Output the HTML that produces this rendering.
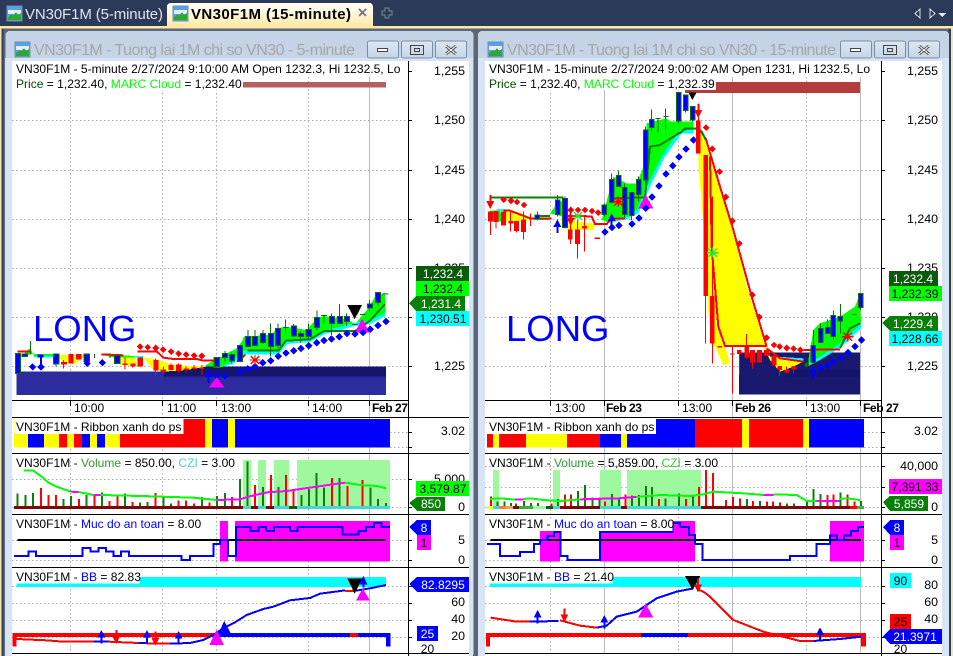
<!DOCTYPE html>
<html><head><meta charset="utf-8"><title>VN30F1M</title>
<style>
html,body{margin:0;padding:0;width:953px;height:656px;overflow:hidden;background:#2b3a58}
svg{position:absolute;left:0;top:0;display:block;shape-rendering:crispEdges}
text{font-family:"Liberation Sans",sans-serif;font-size:12.05px;fill:#000}
.ax{text-anchor:end;font-size:12.4px}
.mid{text-anchor:middle}
.w{fill:#fff}
.g{fill:none;stroke:#aaa;stroke-width:1;stroke-dasharray:1.5 2.5}
.s{fill:none;stroke:#bbb;stroke-width:1}
.k{fill:none;stroke:#000;stroke-width:1}
.c{fill:#00f;stroke:#0a6e0a;stroke-width:3}
.cw{fill:none;stroke:#0a6e0a;stroke-width:3}
.rw{fill:none;stroke:#f00;stroke-width:3}
.ln{fill:none;stroke-width:6;stroke-linejoin:miter}
.bd{fill:none;stroke:none;marker-start:url(#bm);marker-mid:url(#bm);marker-end:url(#bm)}
.rd{fill:none;stroke:none;marker-start:url(#rm);marker-mid:url(#rm);marker-end:url(#rm)}
.vg{fill:none;stroke:#0a800a;stroke-width:6}
.vr{fill:none;stroke:#f00;stroke-width:6}
</style></head><body>
<svg width="953" height="656" viewBox="0 0 953 656" xmlns="http://www.w3.org/2000/svg">
<defs>
<linearGradient id="tab" x1="0" y1="0" x2="0" y2="1"><stop offset="0" stop-color="#fffef8"/><stop offset=".5" stop-color="#fff6d8"/><stop offset="1" stop-color="#ffe8a6"/></linearGradient>
<linearGradient id="ttl" x1="0" y1="0" x2="0" y2="1"><stop offset="0" stop-color="#c4d4e6"/><stop offset="1" stop-color="#d8e5f4"/></linearGradient>
<linearGradient id="btn" x1="0" y1="0" x2="0" y2="1"><stop offset="0" stop-color="#dce7f3"/><stop offset="1" stop-color="#c5d5e7"/></linearGradient>
<marker id="bm" viewBox="-12 -12 24 24" markerWidth="24" markerHeight="24" markerUnits="userSpaceOnUse" refX="0" refY="0"><path d="M0 -11L11 0L0 11L-11 0Z" fill="#00f"/></marker>
<marker id="rm" viewBox="-12 -12 24 24" markerWidth="24" markerHeight="24" markerUnits="userSpaceOnUse" refX="0" refY="0"><path d="M0 -10L10 0L0 10L-10 0Z" fill="#f00"/></marker>
<g id="ic"><rect x="0" y="0" width="15" height="15" fill="#5aa0e8" stroke="#6f8fb0" stroke-width=".7"/><path d="M1 4h13v4H1z" fill="#dfefff"/><path d="M1 14V11L4 8L6 10L9 6L11 9L14 7V14Z" fill="#2fa82f"/></g>
<g id="ua"><path d="M-12 23L0 0L12 23Z"/><rect x="-3" y="23" width="6" height="18"/></g>
<g id="da"><rect x="-3" y="0" width="6" height="20"/><path d="M-12 18L12 18L0 42Z"/></g>
<path id="st" d="M-17 0H17M0 -15V15M-13 -12L13 12M13 -12L-13 12" fill="none" stroke-width="4"/>
</defs>

<!-- tab bar -->
<rect x="0" y="0" width="953" height="26" fill="#2b3a58"/>
<rect x="0" y="26" width="953" height="2.5" fill="#ffe8a6"/>
<rect x="0" y="28.5" width="953" height="628" fill="#5d6675"/>
<rect x="0" y="28" width="1.5" height="628" fill="#f4e4b0"/>
<rect x="951" y="28" width="2" height="628" fill="#f4e4b0"/>
<rect x="1.5" y="28.5" width="2" height="628" fill="#33415c"/>
<rect x="948.5" y="28.5" width="2.5" height="628" fill="#33415c"/>
<use href="#ic" x="7" y="6"/>
<text x="25" y="19" style="font-size:15px;fill:#dfe4ec" textLength="138">VN30F1M (5-minute)</text>
<path d="M167 26V7Q167 3 171 3H369Q373 3 373 7V26Z" fill="url(#tab)"/>
<use href="#ic" x="173" y="6"/>
<text x="191" y="19" style="font-size:15px;font-weight:bold" textLength="160">VN30F1M (15-minute)</text>
<path d="M359 9l7 7M366 9l-7 7" stroke="#777" stroke-width="1.5" fill="none"/>
<path d="M385 8h4v3h3v4h-3v3h-4v-3h-3v-4h3z" fill="none" stroke="#7d8797" stroke-width="1"/>
<path d="M920 9v9l-5 -4.500z" fill="none" stroke="#d8dee8"/>
<path d="M930 9v9l5 -4.500z" fill="none" stroke="#d8dee8"/>
<path d="M938 13h8l-4 4z" fill="#e8ecf2"/>

<!-- left window -->
<rect x="5.500" y="31" width="468" height="626" rx="4" fill="url(#ttl)"/>
<rect x="5" y="58" width="468" height="598" fill="#d6e4f5"/>
<rect x="12" y="61" width="457" height="596" fill="#fff"/>
<use href="#ic" x="15" y="42"/>
<text x="34" y="55" style="font-size:16px;fill:#a6a6a6" textLength="321">VN30F1M - Tuong lai 1M chi so VN30 - 5-minute</text>
<g fill="url(#btn)" stroke="#7d8ea3"><rect x="367.500" y="41" width="31" height="17" rx="2"/><rect x="401.500" y="41" width="31" height="17" rx="2"/><rect x="435.500" y="41" width="31" height="17" rx="2"/></g>
<rect x="377.500" y="48.500" width="10" height="3" fill="#fff" stroke="#444"/>
<rect x="410.500" y="45.500" width="13" height="9" fill="none" stroke="#444"/><rect x="414.500" y="48.500" width="5" height="3" fill="none" stroke="#444"/>
<path d="M446 46l10 8M456 46l-10 8" stroke="#555" stroke-width="3" fill="none"/><path d="M446 46l10 8M456 46l-10 8" stroke="#fff" stroke-width="1" fill="none"/>

<!-- right window -->
<rect x="478" y="31" width="471" height="626" rx="4" fill="url(#ttl)"/>
<rect x="478" y="58" width="471" height="598" fill="#d6e4f5"/>
<rect x="485" y="61" width="457" height="596" fill="#fff"/>
<use href="#ic" x="488" y="42"/>
<text x="507" y="55" style="font-size:16px;fill:#a6a6a6" textLength="329">VN30F1M - Tuong lai 1M chi so VN30 - 15-minute</text>
<g fill="url(#btn)" stroke="#7d8ea3"><rect x="840.500" y="41" width="31" height="17" rx="2"/><rect x="874.500" y="41" width="31" height="17" rx="2"/><rect x="908.500" y="41" width="31" height="17" rx="2"/></g>
<rect x="850.500" y="48.500" width="10" height="3" fill="#fff" stroke="#444"/>
<rect x="883.500" y="45.500" width="13" height="9" fill="none" stroke="#444"/><rect x="887.500" y="48.500" width="5" height="3" fill="none" stroke="#444"/>
<path d="M919 46l10 8M929 46l-10 8" stroke="#555" stroke-width="3" fill="none"/><path d="M919 46l10 8M929 46l-10 8" stroke="#fff" stroke-width="1" fill="none"/>

<!-- LEFT grid -->
<path class="g" d="M70.500 61V653M162.500 61V653M216.500 61V653M308.500 61V653"/>
<path class="s" d="M369.500 61V653"/>
<path class="g" d="M12 120.500H408M12 170.500H408M12 219.500H408M12 268.500H408M12 317.500H408M12 366.500H408M390 432.500H408M390 447.500H408M12 479.500H408M12 507.500H408M12 540.500H408M12 560.500H408M12 586.500H408M12 603.500H408M12 620.500H408M12 637.500H408"/>
<rect x="243" y="82" width="143" height="5.500" fill="#b56060"/>

<!-- LEFT main chart -->
<g transform="translate(0 270) scale(.33333)">
<rect x="50" y="305" width="1108" height="70" fill="#2c2c9f"/>
<rect x="490" y="290" width="668" height="28" fill="#14146b"/>
<rect x="490" y="318" width="668" height="4" fill="#1f1f85"/>
<path d="M66 258L88 235L100 252Z M100 252H170V262L100 258Z M300 254L410 258L420 263L340 262Z M610 290L650 266L650 290Z" fill="#0f0"/>
<path d="M100 258H168V262H100Z M400 258H430V263H400Z" fill="#0ff"/>
<path d="M177 255H250V262L225 282L185 280Z M360 262H410V290L360 285Z M430 262L470 268L520 285L620 290L560 300L490 305L460 300Z" fill="#ff0"/>
<path d="M52 245H95M305 253L370 256" stroke="#f00" stroke-width="6" fill="none"/>
<path class="cw" d="M92 213V252M168 250V290"/>
<rect class="c" x="46" y="250" width="16" height="60"/>
<rect class="c" x="66" y="252" width="16" height="8"/>
<rect x="113" y="253" width="18" height="9" fill="#00f"/>
<path d="M123 262V291M260 272V285" stroke="#00f" stroke-width="6" fill="none"/>
<rect class="c" x="160" y="252" width="17" height="30"/>
<rect x="183" y="276" width="18" height="8" fill="#f00"/><rect x="205" y="252" width="16" height="28" fill="#f00"/><rect x="228" y="252" width="16" height="16" fill="#f00"/>
<rect class="c" x="252" y="252" width="17" height="22"/>
<path class="cw" d="M283 252V264M330 254V264"/>
<rect class="c" x="343" y="256" width="17" height="25"/>
<path class="rw" d="M375 262V298M190 270V295M398 280V292M467 265V318M490 290V312M513 280V302M536 280V308M558 290V308M582 285V298M606 285V315"/>
<rect x="367" y="280" width="16" height="5" fill="#f00"/><rect x="391" y="280" width="16" height="10" fill="#f00"/><rect x="412" y="262" width="17" height="28" fill="#f00"/>
<rect x="460" y="270" width="16" height="32" fill="#f00"/><rect x="482" y="298" width="16" height="8" fill="#f00"/><rect x="505" y="285" width="16" height="15" fill="#f00"/><rect x="528" y="283" width="16" height="20" fill="#f00"/><rect x="551" y="295" width="16" height="5" fill="#f00"/><rect x="575" y="292" width="14" height="5" fill="#f00"/><rect x="598" y="292" width="14" height="5" fill="#f00"/>
<path class="ln" stroke="#f00" d="M412 244H470L490 263L520 267H590L610 272H720L742 245"/>
<path class="rd" d="M420 230h.1M443 232h.1M467 234h.1M489 239h.1M513 245h.1M536 251h.1M558 254h.1M582 257h.1M605 258h.1"/>
<rect class="c" x="642" y="262" width="18" height="28"/>
</g>
<g transform="translate(200 280) scale(.33333)">
<path d="M40 262L50 245L70 225L110 205L125 185L132 170L210 165L235 145L255 140L270 142L320 150L350 115L372 108L445 120L465 132L505 85L525 50L555 38L557 98L510 125L465 130L375 155L330 178L258 185L235 215L130 217L100 245L60 262Z" fill="#0f0"/>
<path d="M60 262L100 252L130 224L235 224L262 192L330 186L375 162L465 138L510 132L557 108L557 96L510 122L465 128L375 152L330 175L258 182L235 212L130 212L100 242Z" fill="#0ff"/>
<path class="ln" stroke="#0a800a" d="M142 212H236L258 182L330 178L372 153H465L510 122L555 72"/>
<path class="cw" d="M75 213V245M95 218V250M120 196V245M144 150V200M165 150V200M189 150V192M212 130V230M234 130V205M256 118V160M249 142H266M281 132V172M302 155V188M326 130V178M351 92V150M372 107V130M363 107H381M395 100V165M419 72V130M440 100V138M456 133H474M480 103H497M509 60V95M534 38V75M548 42H566"/>
<g class="c"><rect x="43" y="232" width="16" height="28"/><rect x="67" y="220" width="15" height="12"/><rect x="88" y="223" width="15" height="20"/><rect x="112" y="196" width="16" height="48"/><rect x="136" y="169" width="16" height="30"/><rect x="157" y="169" width="16" height="28"/><rect x="181" y="160" width="16" height="28"/><rect x="205" y="160" width="15" height="40"/><rect x="226" y="145" width="16" height="52"/><rect x="274" y="138" width="15" height="30"/><rect x="295" y="160" width="15" height="10"/><rect x="318" y="148" width="16" height="22"/><rect x="344" y="112" width="15" height="30"/><rect x="388" y="110" width="16" height="20"/><rect x="412" y="110" width="15" height="20"/><rect x="433" y="110" width="15" height="14"/><rect x="502" y="72" width="15" height="12"/><rect x="526" y="38" width="16" height="30"/></g>
<path d="M466 157L486 115L508 157Z" fill="#f0f"/>
<path d="M442 75H486L464 118Z" fill="#000"/>
</g>
<g transform="translate(0 270) scale(.33333)">
<path class="bd" d="M98 291h.1M123 291h.1M261 280h.1M307 278h.1M651 318h.1M675 318h.1M720 306h.1M743 296h.1M765 290h.1M788 278h.1M812 272h.1M835 259h.1M858 249h.1M881 242h.1M903 236h.1M926 227h.1M950 218h.1M972 212h.1M995 207h.1M1018 200h.1M1041 191h.1M1065 192h.1M1089 188h.1M1111 178h.1M1134 167h.1M1158 155h.1"/>
<use href="#ua" x="626" y="298" fill="#00f"/>
<path d="M627 352L650 322L673 352Z" fill="#f0f"/>
<use href="#st" x="765" y="270" stroke="#f00"/>
</g>
<text x="33" y="341" style="font-size:36.500px;fill:#00f">LONG</text>
<rect x="14" y="61" width="390" height="16" class="w"/><rect x="14" y="77" width="229" height="13" class="w"/>
<text x="16" y="73">VN30F1M - 5-minute 2/27/2024 9:10:00 AM Open 1232.3, Hi 1232.5, Lo</text>
<text x="16" y="88"><tspan fill="#004d00">Price</tspan> = 1,232.40, <tspan fill="#0f0">MARC Cloud</tspan> = 1,232.40</text>

<!-- LEFT lower panes -->
<g transform="translate(0 415) scale(.33333)">
<g>
<rect x="42" y="12" width="42" height="86" fill="#ff0"/><rect x="84" y="12" width="48" height="86" fill="#00f"/><rect x="132" y="12" width="45" height="86" fill="#ff0"/><rect x="177" y="12" width="24" height="86" fill="#f00"/><rect x="201" y="12" width="21" height="86" fill="#ff0"/><rect x="222" y="12" width="24" height="86" fill="#f00"/><rect x="246" y="12" width="24" height="86" fill="#00f"/><rect x="270" y="12" width="21" height="86" fill="#ff0"/><rect x="291" y="12" width="24" height="86" fill="#00f"/><rect x="315" y="12" width="45" height="86" fill="#ff0"/><rect x="360" y="12" width="255" height="86" fill="#f00"/><rect x="615" y="12" width="21" height="86" fill="#ff0"/><rect x="636" y="12" width="48" height="86" fill="#00f"/><rect x="684" y="12" width="21" height="86" fill="#ff0"/><rect x="705" y="12" width="465" height="86" fill="#00f"/>
<rect x="44" y="12" width="506" height="45" fill="#fff"/>
</g>
<g fill="#9ef99e"><rect x="729" y="135" width="24" height="138"/><rect x="774" y="135" width="24" height="138"/><rect x="822" y="135" width="45" height="138"/><rect x="891" y="135" width="279" height="138"/></g>
<rect x="42" y="273" width="687" height="9" fill="#7a0a0a"/>
<rect x="729" y="273" width="441" height="9" fill="#40d8d8"/>
<rect x="753" y="273" width="21" height="9" fill="#7a0a0a"/><rect x="798" y="273" width="24" height="9" fill="#7a0a0a"/><rect x="867" y="273" width="24" height="9" fill="#0a6010"/>
<path class="vg" d="M53 235V273M76 240V273M99 234V273M191 252V273M213 243V273M260 240V273M306 232V273M375 235V273M420 262V273M443 261V273M490 246V273M513 265V273M606 246V273M651 243V273M675 234V273M720 192V273M743 140V273M789 216V273M835 216V273M904 240V273M927 222V273M950 174V273M972 218V273M1019 189V273M1111 218V273M1134 252V273M1158 264V273"/>
<path class="vr" d="M123 219V273M145 240V273M168 240V273M237 252V273M283 238V273M329 258V273M352 245V273M398 261V273M467 234V273M536 256V273M558 257V273M582 265V273M628 262V273M696 246V273M765 210V273M813 180V273M858 180V273M881 222V273M996 189V273M1042 213V273M1088 195V273"/>
<path class="ln" stroke="#0f0" d="M72 167H100L125 185L145 203L170 215L212 230M235 231L280 240M302 240L420 243L580 248L650 255M1035 203L1080 210L1130 213L1158 220"/>
<path class="ln" stroke="#f0f" d="M212 230L235 231M280 240H302M650 255L720 253L745 245L800 232L860 228L950 215L1035 203"/>

<g fill="#f0f"><rect x="660" y="318" width="24" height="122"/><rect x="705" y="318" width="465" height="122"/></g>
<path d="M52 375H1158" stroke="#000" stroke-width="6"/>
<path class="ln" stroke="#00f" d="M42 423H85V410H108V423H248V399H272V410H295V399H318V410H340V423H363V410H387V423H545V435H570V423H640V387H660V375H684V423H708V336H752V348H775V336H798V348H822V336H870V348H893V336H1028V358H1075V348H1098V336H1122V324H1145V336H1170"/>

<rect x="50" y="486" width="1108" height="30" fill="#0ff"/>
<rect x="44" y="470" width="374" height="36" fill="#fff"/>
<path d="M38 654H640V666H38Z M38 666H50V695H38Z M1050 654H1074V666H1050Z" fill="#f00"/>
<path d="M640 654H1050V666H640Z M1074 654H1172V666H1074Z M1158 666H1172V695H1158Z" fill="#00f"/>
<path class="ln" stroke="#f00" d="M50 672L140 676L190 680H280M325 680L415 684M440 686H510M1036 528H1062"/>
<path class="ln" stroke="#00f" d="M280 680H325M415 684H440M510 686L570 684L610 675L640 660L670 640L700 625L740 600L790 582L820 575L870 556L930 549L960 536L1036 526M1062 528L1110 520L1158 510"/>
<use href="#ua" x="304" y="645" fill="#00f"/><use href="#ua" x="441" y="645" fill="#00f"/><use href="#ua" x="536" y="648" fill="#00f"/>
<use href="#da" x="349" y="645" fill="#f00"/><use href="#da" x="466" y="650" fill="#f00"/>
<path d="M655 655L673 618L692 655Z" fill="#00f"/>
<path d="M628 690L650 645L672 690Z" fill="#f0f"/>
<path d="M1078 508L1090 482L1102 508Z M1087 508h6v10h-6z" fill="#00f"/>
<path d="M1042 491H1086L1064 536Z" fill="#000"/>
<path d="M1068 557L1088 520L1110 557Z" fill="#f0f"/>
</g>

<!-- RIGHT grid -->
<path class="g" d="M550.500 61V653M678.500 61V653M806.500 61V653"/>
<path class="s" d="M604.500 61V653M732.500 61V653M860.500 61V653"/>
<path class="g" d="M485 120.500H881M485 170.500H881M485 219.500H881M485 268.500H881M485 317.500H881M485 366.500H881M864 432.500H881M864 447.500H881M485 466.500H881M485 487.500H881M485 507.500H881M485 540.500H881M485 560.500H881M485 586.500H881M485 603.500H881M485 620.500H881M485 637.500H881"/>
<rect x="685" y="82" width="175" height="11" fill="#b33c3c"/>

<!-- RIGHT main chart -->
<g transform="translate(680 80) scale(.33333)">
<rect x="177" y="818" width="363" height="126" fill="#191970"/>
<rect x="318" y="868" width="222" height="22" fill="#14146b"/>
</g>
<g transform="translate(480 80) scale(.33333)">
<path d="M365 420L385 345L400 290L440 310L470 310L495 250L500 130L560 115L570 125L640 125L640 150L600 150L550 220L510 300L470 390L440 410L380 425Z" fill="#0f0"/>
<path d="M380 425L440 410L470 390L510 300L550 220L600 150L640 150L642 160L605 160L555 230L515 310L475 400L440 418L380 430Z" fill="#0ff"/>
<path d="M30 392H60L75 425H40L30 420Z M160 412H210V420H160Z M210 400L228 375L250 360L250 410Z" fill="#0f0"/>
<path d="M50 390H75" stroke="#0ff" stroke-width="5" fill="none"/>
<path d="M60 395L110 395L150 410L140 425L75 425Z M255 420L350 432L340 445L352 475L342 450L260 450Z" fill="#ff0"/>
<path class="ln" stroke="#0a800a" d="M32 353H250M400 355L495 352L510 200L540 195L620 145H650L675 175"/>
<path class="ln" stroke="#f00" d="M70 392H90L150 415H215M260 408H310L335 410L345 432H380L395 415H435"/>
<path class="ln" stroke="#0a800a" d="M175 408H210"/>
<g fill="#f00"><rect x="24" y="395" width="15" height="30"/><rect x="41" y="393" width="15" height="33"/><rect x="63" y="395" width="15" height="42"/><rect x="85" y="423" width="15" height="8"/><rect x="102" y="423" width="15" height="30"/><rect x="123" y="418" width="15" height="38"/><rect x="264" y="448" width="14" height="30"/><rect x="285" y="448" width="15" height="44"/><rect x="306" y="438" width="15" height="8"/><rect x="344" y="473" width="16" height="4"/></g>
<path class="rw" d="M31 395V465M48 395V445M92 395V455M109 430V458M130 395V478M152 400V438M271 420V492M292 420V535M313 405V515"/>
<use href="#da" x="31" y="345" fill="#f00"/>
<use href="#da" x="272" y="395" fill="#f00"/>
<use href="#st" x="294" y="408" stroke="#2ce02c"/>
<path class="rd" d="M71 359h.1M93 362h.1M111 366h.1M132 375h.1M272 390h.1M294 390h.1M315 390h.1M336 393h.1M354 398h.1"/>
<path class="cw" d="M172 395V422M232 345V410M255 350V445M373 370V410M395 280V370M416 272V320M434 310V415M455 338V420M476 290V365M497 140V320M515 88V155M526 115H541M534 115V158M550 110H565M557 85V150M596 38V130M617 45V98M638 80V125"/>
<g class="c"><rect x="165" y="405" width="14" height="12"/><rect x="226" y="360" width="14" height="44"/><rect x="248" y="355" width="14" height="88"/><rect x="366" y="375" width="14" height="28"/><rect x="388" y="298" width="14" height="70"/><rect x="409" y="286" width="14" height="34"/><rect x="427" y="322" width="14" height="82"/><rect x="448" y="338" width="14" height="68"/><rect x="469" y="298" width="14" height="46"/><rect x="490" y="150" width="14" height="150"/><rect x="508" y="118" width="14" height="25"/><rect x="589" y="38" width="14" height="85"/><rect x="610" y="45" width="14" height="47"/><rect x="631" y="80" width="14" height="40"/></g>
<use href="#ua" x="232" y="418" fill="#00f"/>
<use href="#ua" x="395" y="400" fill="#00f"/>
<path d="M474 386L497 344L520 386Z" fill="#f0f"/>
<use href="#st" x="415" y="365" stroke="#f00"/>
<path class="bd" d="M375 456h.1M396 443h.1M417 437h.1M456 432h.1M477 414h.1M497 385h.1M516 351h.1M537 318h.1M558 282h.1M578 257h.1M597 231h.1M618 207h.1M640 180h.1"/>
<path d="M625 37H650L637 60Z" fill="#000"/>
</g>
<g transform="translate(680 80) scale(.33333)">
<path d="M55 145L70 165L85 215L120 310L160 440L200 620L255 790L270 830L370 845L340 860L300 875L270 840L250 800L135 798L150 850L130 855L100 790L85 700L70 430L55 250Z" fill="#ff0"/>
<path d="M385 840L400 750L420 730L450 720L480 710L525 680L540 640L543 730L480 790L420 830L385 850Z" fill="#0f0"/>
<path d="M385 850L420 830L480 790L543 730L543 745L485 800L420 840L385 858Z" fill="#0ff"/>
<path d="M270 830L370 845L370 835L290 830Z" fill="#0ff"/>
<path class="ln" stroke="#f00" d="M60 150L78 178L120 320L160 450L215 650L260 800M90 230L95 500L115 740L135 798H260M260 805L300 835L370 845M370 810L480 808"/>
<path class="ln" stroke="#0a800a" d="M0 160L15 145H45L65 155L78 180M480 805L510 745L540 730"/>
<g fill="#f00"><rect x="48" y="122" width="14" height="98"/><rect x="70" y="225" width="14" height="423"/><rect x="90" y="648" width="14" height="142"/><rect x="112" y="798" width="14" height="4"/><rect x="150" y="820" width="14" height="3"/><rect x="171" y="810" width="14" height="12"/><rect x="193" y="798" width="14" height="35"/><rect x="210" y="810" width="15" height="38"/><rect x="231" y="810" width="15" height="38"/><rect x="252" y="810" width="15" height="18"/><rect x="275" y="826" width="15" height="30"/><rect x="292" y="858" width="14" height="12"/><rect x="313" y="868" width="14" height="10"/><rect x="335" y="858" width="14" height="10"/></g>
<path class="rw" d="M55 70V220M77 225V790M97 350V850M157 798V940M178 810V885M200 762V835M217 810V865M299 858V888M320 860V880M341 858V880"/>
<use href="#st" x="98" y="518" stroke="#2ce02c"/>
<path class="rd" d="M78 143h.1M97 207h.1M119 275h.1M137 351h.1M157 423h.1M178 491h.1M217 645h.1M238 711h.1M260 773h.1M282 795h.1M299 800h.1M320 804h.1M341 806h.1M361 810h.1"/>
<use href="#da" x="55" y="72" fill="#f00"/>
<path class="cw" d="M400 750V847M422 730V787M443 718V760M460 692V780M481 672V760M517 703H530M542 640V690"/>
<g class="c"><rect x="393" y="797" width="14" height="50"/><rect x="415" y="745" width="14" height="42"/><rect x="436" y="742" width="14" height="18"/><rect x="453" y="706" width="14" height="64"/><rect x="474" y="709" width="14" height="14"/><rect x="535" y="640" width="14" height="43"/></g>
<use href="#ua" x="401" y="858" fill="#00f"/>
<path d="M380 854h.1" stroke="#0a6e0a" stroke-width="14" stroke-linecap="round"/>
<path class="bd" d="M422 863h.1M443 857h.1M461 846h.1M483 833h.1M504 818h.1M525 800h.1M544 780h.1"/>
<use href="#st" x="503" y="770" stroke="#f00"/>
</g>
<text x="506" y="341" style="font-size:36.500px;fill:#00f">LONG</text>
<rect x="487" y="61" width="390" height="16" class="w"/><rect x="487" y="77" width="229" height="13" class="w"/>
<text x="489" y="73">VN30F1M - 15-minute 2/27/2024 9:00:02 AM Open 1231, Hi 1232.5, Lo</text>
<text x="489" y="88"><tspan fill="#004d00">Price</tspan> = 1,232.40, <tspan fill="#0f0">MARC Cloud</tspan> = 1,232.39</text>

<!-- RIGHT lower panes -->
<g transform="translate(480 415) scale(.33333)">
<rect x="21" y="12" width="18" height="86" fill="#f00"/><rect x="39" y="12" width="18" height="86" fill="#ff0"/><rect x="57" y="12" width="81" height="86" fill="#f00"/><rect x="138" y="12" width="123" height="86" fill="#ff0"/><rect x="261" y="12" width="99" height="86" fill="#f00"/><rect x="360" y="12" width="63" height="86" fill="#00f"/><rect x="423" y="12" width="18" height="86" fill="#ff0"/><rect x="441" y="12" width="204" height="86" fill="#00f"/><rect x="645" y="12" width="141" height="86" fill="#f00"/><rect x="786" y="12" width="21" height="86" fill="#ff0"/><rect x="807" y="12" width="162" height="86" fill="#f00"/><rect x="969" y="12" width="18" height="86" fill="#ff0"/><rect x="987" y="12" width="165" height="86" fill="#00f"/>
<rect x="18" y="12" width="510" height="45" fill="#fff"/>

<g fill="#9ef99e"><rect x="39" y="165" width="18" height="108"/><rect x="219" y="165" width="21" height="108"/><rect x="360" y="165" width="63" height="108"/><rect x="441" y="165" width="222" height="108"/></g>
<rect x="21" y="273" width="18" height="9" fill="#ff0"/><rect x="39" y="273" width="18" height="9" fill="#40d8d8"/><rect x="57" y="273" width="21" height="9" fill="#ff7f27"/><rect x="78" y="273" width="21" height="9" fill="#f0a060"/><rect x="99" y="273" width="18" height="9" fill="#7a0a0a"/><rect x="117" y="273" width="42" height="9" fill="#3cb03c"/><rect x="159" y="273" width="39" height="9" fill="#9ef99e"/><rect x="198" y="273" width="21" height="9" fill="#0a6010"/><rect x="219" y="273" width="21" height="9" fill="#40d8d8"/><rect x="240" y="273" width="120" height="9" fill="#7a0a0a"/><rect x="360" y="273" width="63" height="9" fill="#40d8d8"/><rect x="423" y="273" width="18" height="9" fill="#7a0a0a"/><rect x="441" y="273" width="222" height="9" fill="#40d8d8"/><rect x="663" y="273" width="447" height="9" fill="#7a0a0a"/><rect x="1110" y="273" width="21" height="9" fill="#f00"/><rect x="1131" y="273" width="21" height="9" fill="#3cb03c"/>
<path class="vg" d="M52 260V273M74 260V273M93 264V273M108 265V273M132 258V273M153 264V273M174 264V273M234 252V273M294 228V273M315 210V273M337 248V273M358 248V273M396 237V273M417 248V273M456 242V273M477 240V273M498 213V273M516 216V273M556 250V273M597 235V273M639 242V273M801 252V273M840 258V273M921 265V273M942 265V273M981 256V273M1000 222V273M1022 237V273M1082 232V273M1143 258V273"/>
<path class="vr" d="M33 245V273M214 265V273M255 238V273M273 238V273M375 260V273M436 238V273M537 252V273M618 252V273M657 216V273M678 165V273M699 174V273M738 255V273M759 246V273M780 250V273M819 258V273M861 260V273M879 260V273M900 262V273M1043 240V273M1061 238V273M1103 238V273M1124 260V273"/>
<path class="ln" stroke="#0f0" d="M30 252L60 250L105 254M130 252L150 250L190 255L240 258L300 253M470 246L540 240L630 243L670 238L700 230L790 235L850 240M880 238L950 240L980 258L1010 258M1080 252L1100 250L1140 255"/>
<path class="ln" stroke="#f0f" d="M105 254H130M300 253L415 250L470 246M850 240H880M1010 258H1080"/>

<g fill="#f0f"><rect x="180" y="318" width="60" height="122"/><rect x="360" y="318" width="285" height="122"/><rect x="1050" y="318" width="102" height="122"/></g>
<path d="M32 375H1143" stroke="#000" stroke-width="6"/>
<path class="ln" stroke="#00f" d="M21 387H60V423H120V411H162V387H180V375H203V363H222V351H241V423H263V435H360V351H578V324H600V336H627V360H645V387H667V435H930V423H1010V387H1050V362H1071V375H1092V362H1113V348H1134V336H1152"/>
<rect x="24" y="310" width="554" height="38" fill="#fff"/>

<rect x="30" y="486" width="1113" height="30" fill="#0ff"/>
<rect x="24" y="470" width="374" height="36" fill="#fff"/>
<path d="M18 654H483V666H18Z M18 666H30V695H18Z M624 654H1158V666H624Z M1143 666H1158V695H1143Z" fill="#f00"/>
<rect x="483" y="654" width="141" height="12" fill="#00f"/>
<path class="ln" stroke="#f00" d="M32 608L110 620H150M240 616L300 632L350 638M650 522L670 530L690 545L760 615L850 650L960 678H1000"/>
<path class="ln" stroke="#00f" d="M150 620L235 618M350 638L380 632L410 605L470 590L530 550L590 530L640 520M1000 678L1080 672L1143 665"/>
<use href="#ua" x="173" y="585" fill="#00f"/><use href="#da" x="253" y="580" fill="#f00"/><use href="#ua" x="373" y="600" fill="#00f"/><use href="#ua" x="1020" y="637" fill="#00f"/>
<path d="M474 608L497 566L520 608Z" fill="#f0f"/>
<path d="M615 483H661L638 525Z" fill="#000"/>
<use href="#da" x="654" y="490" fill="#f00"/>
</g>

<!-- LEFT axis -->
<path class="k" d="M408.500 61V657M12 400.500H408M12 417.500H469M12 453.500H469M12 514.500H469M12 567.500H469M12 653.500H469"/>
<path d="M408 71.500h4M408 120.500h4M408 170.500h4M408 219.500h4M408 268.500h4M408 317.500h4M408 366.500h4M70.500 400v6M162.500 400v6M216.500 400v6M308.500 400v6M369.500 400v6M408 432.500h4M408 447.500h4M408 479.500h4M408 507.500h4M408 540.500h4M408 560.500h4M408 586.500h4M408 603.500h4M408 620.500h4M408 637.500h4" stroke="#000" fill="none"/>
<text x="465" y="75" class="ax">1,255</text><text x="465" y="124" class="ax">1,250</text><text x="465" y="174" class="ax">1,245</text><text x="465" y="223" class="ax">1,240</text><text x="465" y="272" class="ax">1,235</text><text x="465" y="321" class="ax">1,230</text><text x="465" y="370" class="ax">1,225</text><text x="465" y="435" class="ax">3.02</text><text x="465" y="483" class="ax">5,000</text><text x="465" y="511" class="ax">0</text><text x="465" y="544" class="ax">5</text><text x="465" y="564" class="ax">0</text><text x="465" y="606" class="ax">60</text><text x="465" y="623" class="ax">40</text><text x="465" y="640" class="ax">20</text>
<text x="74" y="412">10:00</text><text x="167" y="412">11:00</text><text x="221" y="412">13:00</text><text x="312" y="412">14:00</text><text x="372" y="412" style="font-weight:bold" textLength="36">Feb 27</text>
<rect x="416" y="266" width="53" height="15" fill="#0a5a0a"/><text x="443" y="278" class="mid" style="fill:#fff">1,232.4</text>
<rect x="416" y="281" width="53" height="15" fill="#0f0"/><text x="443" y="293" class="mid">1,232.4</text>
<path d="M409 303L416 296H465V311H416Z" fill="#088008"/><text x="441" y="308" class="mid" style="fill:#fff">1,231.4</text>
<rect x="416" y="311" width="53" height="15" fill="#0ff"/><text x="443" y="323" class="mid">1,230.51</text>
<rect x="416" y="481" width="53" height="15" fill="#0f0"/><text x="443" y="493" class="mid">3,579.87</text>
<path d="M409 503L417 497H445V511H417Z" fill="#088008"/><text x="431" y="508" class="mid" style="fill:#fff">850</text>
<path d="M409 527L417 520H431V535H417Z" fill="#00f"/><text x="424" y="532" class="mid" style="fill:#fff">8</text>
<rect x="417" y="535" width="14" height="15" fill="#f0f"/><text x="424" y="547" class="mid">1</text>
<path d="M409 584L417 577H469V592H417Z" fill="#00f"/><text x="443" y="589" class="mid" style="fill:#fff">82.8295</text>
<rect x="417" y="626" width="21" height="15" fill="#00f"/><text x="427.500" y="638" class="mid" style="fill:#fff">25</text>
<text x="427.500" y="653" class="mid">20</text>

<!-- RIGHT axis -->
<path class="k" d="M881.500 61V657M485 400.500H881M485 417.500H942M485 453.500H942M485 514.500H942M485 567.500H942M485 653.500H942"/>
<path d="M881 71.500h4M881 120.500h4M881 170.500h4M881 219.500h4M881 268.500h4M881 317.500h4M881 366.500h4M550.500 400v6M604.500 400v6M678.500 400v6M732.500 400v6M806.500 400v6M860.500 400v6M881 432.500h4M881 447.500h4M881 466.500h4M881 487.500h4M881 507.500h4M881 540.500h4M881 560.500h4M881 586.500h4M881 603.500h4M881 620.500h4M881 637.500h4" stroke="#000" fill="none"/>
<text x="938" y="75" class="ax">1,255</text><text x="938" y="124" class="ax">1,250</text><text x="938" y="174" class="ax">1,245</text><text x="938" y="223" class="ax">1,240</text><text x="938" y="272" class="ax">1,235</text><text x="938" y="321" class="ax">1,230</text><text x="938" y="370" class="ax">1,225</text><text x="938" y="435" class="ax">3.02</text><text x="938" y="470" class="ax">40,000</text><text x="938" y="511" class="ax">0</text><text x="938" y="544" class="ax">5</text><text x="938" y="564" class="ax">0</text><text x="938" y="589" class="ax">80</text><text x="938" y="606" class="ax">60</text><text x="938" y="623" class="ax">40</text>
<text x="555" y="412">13:00</text><text x="606" y="412" style="font-weight:bold" textLength="36">Feb 23</text><text x="682" y="412">13:00</text><text x="735" y="412" style="font-weight:bold" textLength="36">Feb 26</text><text x="810" y="412">13:00</text><text x="863" y="412" style="font-weight:bold" textLength="36">Feb 27</text>
<rect x="889" y="271" width="49" height="15" fill="#0a5a0a"/><text x="913" y="283" class="mid" style="fill:#fff">1,232.4</text>
<rect x="889" y="286" width="53" height="15" fill="#0f0"/><text x="915" y="298" class="mid">1,232.39</text>
<path d="M882 323L890 316H938V331H890Z" fill="#088008"/><text x="913" y="328" class="mid" style="fill:#fff">1,229.4</text>
<rect x="889" y="331" width="53" height="15" fill="#0ff"/><text x="915" y="343" class="mid">1,228.66</text>
<rect x="889" y="479" width="53" height="15" fill="#f0f"/><text x="915" y="491" class="mid">7,391.33</text>
<path d="M883 502L890 496H928V511H890Z" fill="#088008"/><text x="909" y="508" class="mid" style="fill:#fff">5,859</text>
<path d="M883 527L890 520H904V535H890Z" fill="#00f"/><text x="897" y="532" class="mid" style="fill:#fff">8</text>
<rect x="890" y="535" width="14" height="15" fill="#f0f"/><text x="897" y="547" class="mid">1</text>
<rect x="890" y="573" width="21" height="15" fill="#0ff"/><text x="900.500" y="585" class="mid">90</text>
<rect x="890" y="614" width="21" height="15" fill="#f00"/><text x="900.500" y="626" class="mid">25</text>
<path d="M883 636L890 629H942V644H890Z" fill="#00f"/><text x="915" y="641" class="mid" style="fill:#fff">21.3971</text>
<text x="900.500" y="653" class="mid">20</text>

<!-- legends for lower panes -->
<text x="16" y="431">VN30F1M - Ribbon xanh do ps</text>
<text x="16" y="467">VN30F1M - <tspan fill="#2e9a2e">Volume</tspan> = 850.00, <tspan fill="#4fd0d0">CZI</tspan> = 3.00</text>
<text x="16" y="528">VN30F1M - <tspan fill="#00f">Muc do an toan</tspan> = 8.00</text>
<text x="16" y="581">VN30F1M - <tspan fill="#00f">BB</tspan> = 82.83</text>
<text x="489" y="431">VN30F1M - Ribbon xanh do ps</text>
<text x="489" y="467">VN30F1M - <tspan fill="#2e9a2e">Volume</tspan> = 5,859.00, <tspan fill="#3cc83c">CZI</tspan> = 3.00</text>
<text x="489" y="528">VN30F1M - <tspan fill="#00f">Muc do an toan</tspan> = 8.00</text>
<text x="489" y="581">VN30F1M - <tspan fill="#00f">BB</tspan> = 21.40</text>
</svg>
</body></html>
